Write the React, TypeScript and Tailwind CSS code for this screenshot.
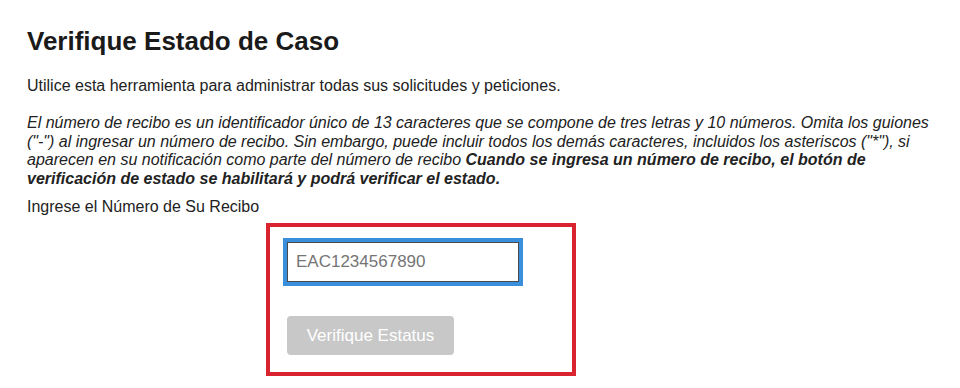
export default function App() {
  return (
    <div className="min-h-screen bg-white text-[#222] font-['Liberation_Sans',Arial,sans-serif]">
      <div className="pl-[27px] pr-[10px] pt-[26px]">
        <h1 className="text-[26px] leading-[30px] font-bold text-[#1a1a1a]">Verifique Estado de Caso</h1>

        <p className="mt-[21px] text-[16px] leading-[18px]">
          Utilice esta herramienta para administrar todas sus solicitudes y peticiones.
        </p>

        {/* receipt number help text, lines kept as in the original */}
        <p className="mt-[19px] text-[16px] leading-[18.5px] italic whitespace-nowrap">
          El número de recibo es un identificador único de 13 caracteres que se compone de tres letras y 10 números. Omita los guiones
          <br />
          ("-") al ingresar un número de recibo. Sin embargo, puede incluir todos los demás caracteres, incluidos los asteriscos ("*"), si
          <br />
          aparecen en su notificación como parte del número de recibo{" "}
          <strong>Cuando se ingresa un número de recibo, el botón de</strong>
          <br />
          <strong>verificación de estado se habilitará y podrá verificar el estado.</strong>
        </p>

        <p className="mt-[10px] text-[16px] leading-[18px]">Ingrese el Número de Su Recibo</p>
      </div>

      <div className="ml-[266px] mt-[7px] w-[310px] h-[153px] border-4 border-[#d9232f] pl-[13px] pt-[11px]">
        <div className="w-[240px] h-[48px] border-4 border-[#3a8fdc]">
          <input
            readOnly
            placeholder="EAC1234567890"
            className="w-full h-full border border-[#4a4a4a] px-[8px] text-[17px] text-[#555] placeholder:text-[#757575] outline-none"
          />
        </div>
        <button
          disabled
          className="mt-[30px] ml-[4px] w-[167px] h-[39px] rounded-[4px] bg-[#c8c8c8] text-white text-[17px]"
        >
          Verifique Estatus
        </button>
      </div>
    </div>
  )
}
